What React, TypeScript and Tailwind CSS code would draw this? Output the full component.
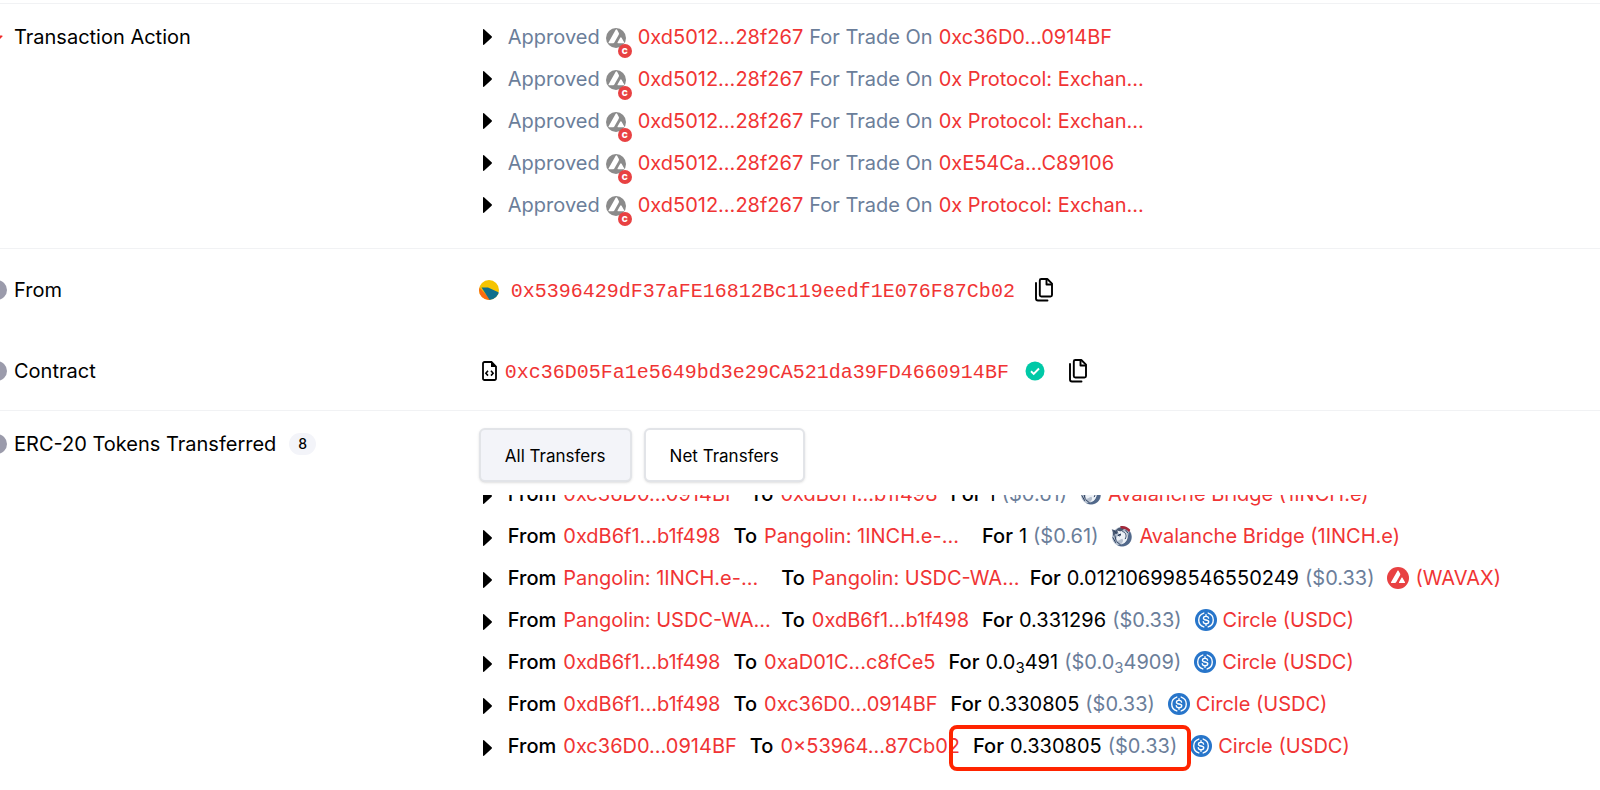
import type { ReactNode } from "react";

type Token = "inch" | "avax" | "usdc";

type Amount = { lead: string; sub?: string; rest?: string };

type Transfer = {
  from: string;
  to: string;
  amount: Amount;
  usd: Amount;
  token: Token;
  name: string;
  highlighted?: boolean;
};

const approvals = [
  "0xc36D0...0914BF",
  "0x Protocol: Exchan...",
  "0x Protocol: Exchan...",
  "0xE54Ca...C89106",
  "0x Protocol: Exchan..."
];

const transfers: Transfer[] = [
  {
    from: "0xc36D0...0914BF",
    to: "0xdB6f1...b1f498",
    amount: { lead: "1" },
    usd: { lead: "0.61" },
    token: "inch",
    name: "Avalanche Bridge (1INCH.e)"
  },
  {
    from: "0xdB6f1...b1f498",
    to: "Pangolin: 1INCH.e-...",
    amount: { lead: "1" },
    usd: { lead: "0.61" },
    token: "inch",
    name: "Avalanche Bridge (1INCH.e)"
  },
  {
    from: "Pangolin: 1INCH.e-...",
    to: "Pangolin: USDC-WA...",
    amount: { lead: "0.012106998546550249" },
    usd: { lead: "0.33" },
    token: "avax",
    name: "(WAVAX)"
  },
  {
    from: "Pangolin: USDC-WA...",
    to: "0xdB6f1...b1f498",
    amount: { lead: "0.331296" },
    usd: { lead: "0.33" },
    token: "usdc",
    name: "Circle (USDC)"
  },
  {
    from: "0xdB6f1...b1f498",
    to: "0xaD01C...c8fCe5",
    amount: { lead: "0.0", sub: "3", rest: "491" },
    usd: { lead: "0.0", sub: "3", rest: "4909" },
    token: "usdc",
    name: "Circle (USDC)"
  },
  {
    from: "0xdB6f1...b1f498",
    to: "0xc36D0...0914BF",
    amount: { lead: "0.330805" },
    usd: { lead: "0.33" },
    token: "usdc",
    name: "Circle (USDC)"
  },
  {
    from: "0xc36D0...0914BF",
    to: "0×53964...87Cb02",
    amount: { lead: "0.330805" },
    usd: { lead: "0.33" },
    token: "usdc",
    name: "Circle (USDC)",
    highlighted: true
  }
];

function Caret({ className = "" }: { className?: string }) {
  return (
    <svg viewBox="0 0 9 16" className={`ml-1 h-4 w-[9px] shrink-0 ${className}`} aria-hidden="true">
      <path d="M0 .8C0 .2.6-.1 1 .3l7.600 7c.5.4.5 1 0 1.400L1 15.700c-.4.4-1 .1-1-.5z" fill="#000" />
    </svg>
  );
}

function AvaxPeaks() {
  return (
    <>
      <path
        d="M11.400 23.200H6.900c-1 0-1.400-.7-.9-1.500l9.100-15.900c.5-.9 1.300-.9 1.800 0l2.100 3.800c.5.900.5 1.600 0 2.500l-5.500 9.600c-.5.9-1.100 1.500-2.100 1.500z"
        fill="#fff"
      />
      <path
        d="M18.400 23.200h6.700c1 0 1.400-.7.900-1.500l-3.300-5.700c-.5-.9-1.300-.9-1.800 0l-3.300 5.700c-.5.8-.1 1.500.8 1.500z"
        fill="#fff"
      />
    </>
  );
}

function AvaxIcon() {
  return (
    <svg viewBox="0 0 32 32" className="size-[22px] shrink-0" aria-hidden="true">
      <circle cx="16" cy="16" r="16" fill="#e84142" />
      <AvaxPeaks />
    </svg>
  );
}

function ApprovedTokenIcon() {
  return (
    <span className="relative mt-[2px] mr-[6px]">
      <svg viewBox="0 0 32 32" className="size-5 shrink-0" aria-hidden="true">
        <circle cx="16" cy="16" r="16" fill="#8b8b8b" />
        <g transform="translate(-3.200 -4.200) scale(1.240)">
          <AvaxPeaks />
        </g>
      </svg>
      <span className="absolute -right-[6px] -bottom-[10px] grid size-[14px] place-items-center rounded-full bg-[#e84142] text-[8px] leading-none font-black text-white">
        C
      </span>
    </span>
  );
}

function UsdcIcon() {
  return (
    <svg viewBox="0 0 32 32" className="size-[22px] shrink-0" aria-hidden="true">
      <circle cx="16" cy="16" r="16" fill="#2775ca" />
      <path
        d="M12.800 5.900a10.600 10.600 0 0 0 0 20.200M19.200 5.900a10.600 10.600 0 0 1 0 20.200"
        fill="none"
        stroke="#fff"
        strokeWidth="2"
        strokeLinecap="round"
      />
      <path
        d="M19.800 13.200c-.3-1.700-1.700-2.500-3.800-2.500-2.200 0-3.700 1-3.700 2.600 0 3.900 7.700 1.500 7.700 5.300 0 1.700-1.600 2.700-4 2.700-2.300 0-3.800-1-4-2.800M16 8.400v2.300M16 21.300v2.300"
        fill="none"
        stroke="#fff"
        strokeWidth="2"
        strokeLinecap="round"
      />
    </svg>
  );
}

function InchIcon() {
  return (
    <svg viewBox="0 0 32 32" className="size-[22px] shrink-0" aria-hidden="true">
      <circle cx="16" cy="17" r="14.500" fill="#b4bfce" />
      <path d="M1 6l6 2c3-4 8-5.500 13-4l-3 4-9 4-5 4C3 12 2.500 9 1 6z" fill="#4a5972" />
      <path d="M13 2c5-1.500 11 0 15 5l-1.500 3.500C23 6.500 19 5 15 5z" fill="#a3283a" />
      <path d="M27 9c4.500 6 3.500 14-1.500 18.500-5 4.500-12 4.500-16.500 1.500 6 0 11-2 13.500-6.500C25 18 24.500 14 27 9z" fill="#51688a" />
      <path d="M9 8l5 1.500c4-1.500 8 .5 9.500 4.500 1.500 5-.5 9-4 12l-5 2c3-3 4-6 2-8-3 1-5 3-7 3-2-1-2-3-1-5l3-5z" fill="#eef2f7" />
      <path
        d="M10 15l4-2-1 3zM16.500 9.500c5 1 7 6 4 11M2.500 18l4.500 8M5.500 15l2 8M8 24l6 5M5 9l4 4M21 7l4 5"
        fill="none"
        stroke="#26395a"
        strokeWidth="1.400"
      />
    </svg>
  );
}

function TokenIcon({ token }: { token: Token }) {
  if (token === "usdc") return <UsdcIcon />;
  if (token === "avax") return <AvaxIcon />;
  return <InchIcon />;
}

function ContractIcon() {
  return (
    <svg viewBox="0 0 15 20" className="ml-[3px] h-5 w-[15px] shrink-0" aria-hidden="true">
      <path
        d="M2.500 1H9.500L14 5.500V17.500A1.500 1.500 0 0 1 12.500 19H2.500A1.500 1.500 0 0 1 1 17.500V2.500A1.500 1.500 0 0 1 2.500 1z"
        fill="none"
        stroke="#000"
        strokeWidth="1.800"
      />
      <path d="M9 1v5h5z" fill="#000" />
      <path d="M6 9.800L3.900 12.200 6 14.600M9 9.800l2.100 2.400L9 14.600" fill="none" stroke="#000" strokeWidth="1.600" />
    </svg>
  );
}

function CopyButton({ label, className = "" }: { label: string; className?: string }) {
  return (
    <button type="button" aria-label={label} className={`shrink-0 ${className}`}>
      <svg viewBox="0 0 18 24" className="h-6 w-[18px]" fill="none" stroke="#000" strokeWidth="1.900" strokeLinejoin="round">
        <path d="M6.300 1h6L17 5.700V17a1.500 1.500 0 0 1-1.500 1.500H6.300A1.500 1.500 0 0 1 4.800 17V2.500A1.500 1.500 0 0 1 6.300 1z" />
        <path d="M11.500 1.300V6.500h5.200" />
        <path d="M1 5v15.500A2 2 0 0 0 3 22.500h9.500" strokeLinecap="round" />
      </svg>
    </button>
  );
}

function Label({ children, caret = false }: { children: ReactNode; caret?: boolean }) {
  return (
    <div className="-ml-[13px] flex items-center gap-[7px]">
      {caret ? (
        <svg viewBox="0 0 20 20" className="size-5 shrink-0" aria-hidden="true">
          <path d="M3 8.500h12c.5 0 .7.500.4.900L11 14H6z" fill="#f02a2b" />
        </svg>
      ) : (
        <span className="size-5 shrink-0 rounded-full bg-[#9b9bab]" />
      )}
      {children}
    </div>
  );
}

function Link({ children, className = "" }: { children: ReactNode; className?: string }) {
  return (
    <a href="#" className={`text-[#f03434] ${className}`}>
      {children}
    </a>
  );
}

function Value({ lead, sub, rest }: Amount) {
  return (
    <>
      {lead}
      {sub ? <sub className="text-[15px]">{sub}</sub> : null}
      {rest}
    </>
  );
}

function Party({ title, name }: { title: string; name: string }) {
  return (
    <span className="flex gap-[7px]">
      <span className="font-medium">{title}</span>
      <Link className={name.startsWith("Pangolin") ? "w-[205px]" : ""}>{name}</Link>
    </span>
  );
}

function TransferRow({ from, to, amount, usd, token, name, highlighted }: Transfer) {
  return (
    <li className="flex h-[42px] shrink-0 items-center">
      <Caret className="mt-1" />
      <div className="ml-4 flex items-center gap-[13px]">
        <Party title="From" name={from} />
        <Party title="To" name={to} />
        <span className="relative flex gap-[6px]">
          <span className="font-medium">For</span>
          <span>
            <Value {...amount} />
          </span>
          <span className="text-[#6b7e9a]">
            ($
            <Value {...usd} />)
          </span>
          {highlighted ? (
            <span className="absolute -top-[6px] -right-[14px] -bottom-[10px] -left-6 rounded-lg border-4 border-[#ff2400]" />
          ) : null}
        </span>
        <span className="flex items-center gap-[6px]">
          <TokenIcon token={token} />
          <Link>{name}</Link>
        </span>
      </div>
    </li>
  );
}

export default function App() {
  return (
    <main className="overflow-hidden bg-white pt-[3px] font-['Inter','Liberation_Sans',sans-serif] text-[20px] leading-[30px] whitespace-nowrap text-black">
      <section className="grid grid-cols-[3fr_7fr] border-t border-[#f1f2f4] pt-3 pr-1 pb-[22px]">
        <div className="flex h-[42px] items-center">
          <Label caret>Transaction Action</Label>
        </div>
        <ul>
          {approvals.map((spender, index) => (
            <li key={index} className="flex h-[42px] items-center">
              <Caret />
              <div className="ml-4 flex items-center gap-[6px] text-[#6b7e9a]">
                <span>Approved</span>
                <ApprovedTokenIcon />
                <Link>0xd5012...28f267</Link>
                <span>For Trade On</span>
                <Link>{spender}</Link>
              </div>
            </li>
          ))}
        </ul>
      </section>

      <section className="grid grid-cols-[3fr_7fr] gap-y-[41px] border-t border-[#f1f2f4] pt-[21px] pr-1 pb-[19px]">
        <div className="flex h-10 items-center">
          <Label>From</Label>
        </div>
        <div className="flex h-10 items-center">
          <svg viewBox="0 0 20 20" className="size-5 shrink-0" aria-hidden="true">
            <clipPath id="avatar">
              <circle cx="10" cy="10" r="10" />
            </clipPath>
            <g clipPath="url(#avatar)">
              <path d="M0 0h20v20H0z" fill="#f5c400" />
              <path d="M0 7l12 13H0z" fill="#fb6b12" />
              <path d="M2.500 7.500H9l11 5v8H11z" fill="#0f6f8c" />
            </g>
          </svg>
          <Link className="mt-1 ml-3 font-['Liberation_Mono',monospace]">0x5396429dF37aFE16812Bc119eedf1E076F87Cb02</Link>
          <CopyButton label="Copy from address" className="ml-5" />
        </div>
        <div className="flex h-10 items-center">
          <Label>Contract</Label>
        </div>
        <div className="flex h-10 items-center">
          <ContractIcon />
          <Link className="mt-1 ml-2 font-['Liberation_Mono',monospace]">0xc36D05Fa1e5649bd3e29CA521da39FD4660914BF</Link>
          <svg viewBox="0 0 20 20" className="ml-4 size-5 shrink-0" aria-hidden="true">
            <circle cx="10" cy="10" r="9.500" fill="#00c9a7" />
            <path d="M6 10.300l2.700 2.600L14 7.500" fill="none" stroke="#fff" strokeWidth="1.900" />
          </svg>
          <CopyButton label="Copy contract address" className="ml-6" />
        </div>
      </section>

      <section className="grid grid-cols-[3fr_7fr] border-t border-[#f1f2f4] pt-[17px] pr-1">
        <div className="flex h-8 items-center">
          <Label>ERC-20 Tokens Transferred</Label>
          <span className="ml-[13px] rounded-full bg-[#f3f4f9] px-[9px] text-sm leading-[22px] font-medium">8</span>
        </div>
        <div>
          <div className="flex gap-3">
            <button
              type="button"
              className="h-[54px] rounded-md border-2 border-[#e2e4e8] bg-[#f3f4f9] px-6 pt-[2px] text-[17px] shadow-sm"
            >
              All Transfers
            </button>
            <button
              type="button"
              className="h-[54px] rounded-md border-2 border-[#e2e4e8] bg-white px-6 pt-[2px] text-[17px] shadow-sm"
            >
              Net Transfers
            </button>
          </div>
          <ul className="mt-[13px] flex h-[295px] flex-col justify-end overflow-hidden pb-[23px]">
            {transfers.map((transfer, index) => (
              <TransferRow key={index} {...transfer} />
            ))}
          </ul>
        </div>
      </section>
    </main>
  );
}
